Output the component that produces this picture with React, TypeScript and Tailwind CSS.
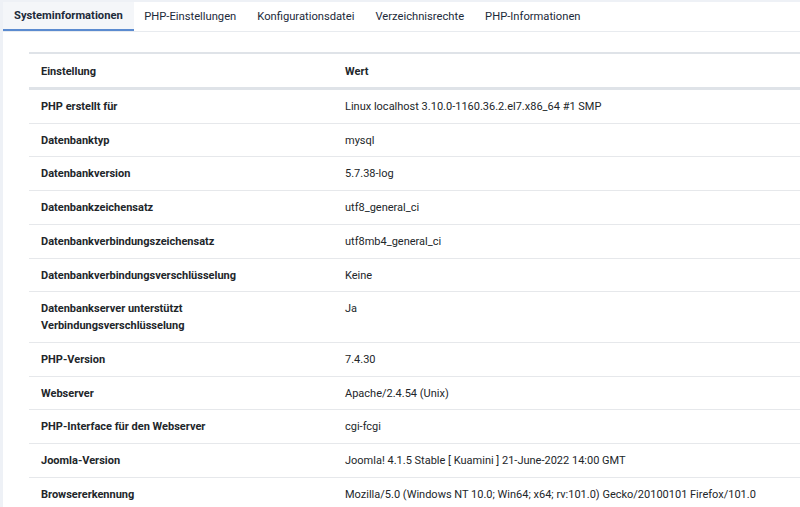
import React from 'react';

const tabs = [
  'Systeminformationen',
  'PHP-Einstellungen',
  'Konfigurationsdatei',
  'Verzeichnisrechte',
  'PHP-Informationen',
];

const rows: [string, string][] = [
  ['PHP erstellt für', 'Linux localhost 3.10.0-1160.36.2.el7.x86_64 #1 SMP'],
  ['Datenbanktyp', 'mysql'],
  ['Datenbankversion', '5.7.38-log'],
  ['Datenbankzeichensatz', 'utf8_general_ci'],
  ['Datenbankverbindungszeichensatz', 'utf8mb4_general_ci'],
  ['Datenbankverbindungsverschlüsselung', 'Keine'],
  ['Datenbankserver unterstützt Verbindungsverschlüsselung', 'Ja'],
  ['PHP-Version', '7.4.30'],
  ['Webserver', 'Apache/2.4.54 (Unix)'],
  ['PHP-Interface für den Webserver', 'cgi-fcgi'],
  ['Joomla-Version', 'Joomla! 4.1.5 Stable [ Kuamini ] 21-June-2022 14:00 GMT'],
  ['Browsererkennung', 'Mozilla/5.0 (Windows NT 10.0; Win64; x64; rv:101.0) Gecko/20100101 Firefox/101.0'],
];

export default function App() {
  return (
    <div className="h-[507px] overflow-hidden bg-[#eef1f6] pl-[3px] pt-[2px] font-['Roboto',sans-serif] text-[#22262a]">
      <div className="bg-white h-full">
        {/* Tabs */}
        <nav className="flex h-[30px] border-b border-[#e8ebef] text-[11.2px] text-[#1c2a3a]">
          {tabs.map((t, i) => (
            <div
              key={t}
              className={
                i === 0
                  ? 'px-[11px] pt-[2px] flex items-center font-bold bg-[#f4f6f9] border-b-[2px] border-[#5b8bd0]'
                  : 'px-[10.5px] pt-[2px] flex items-center'
              }
            >
              {t}
            </div>
          ))}
        </nav>

        {/* Table */}
        <div className="pl-[26px] pt-[20px]">
          <table className="w-full border-collapse text-[11px] leading-[16.75px]">
            <thead>
              <tr className="border-t-2 border-b-[3px] border-[#dfe3e8]">
                <th className="text-left font-bold pl-[12px] pt-[10px] pb-[6px] w-[316px]">Einstellung</th>
                <th className="text-left font-bold pt-[10px] pb-[6px]">Wert</th>
              </tr>
            </thead>
            <tbody>
              {rows.map(([k, v]) => (
                <tr key={k} className="border-b border-[#e6e8eb] align-top">
                  <td className="font-bold pl-[12px] pr-[40px] pt-[9px] pb-[7px]">{k}</td>
                  <td className="pt-[9px] pb-[7px] whitespace-nowrap">{v}</td>
                </tr>
              ))}
            </tbody>
          </table>
        </div>
      </div>
    </div>
  );
}
